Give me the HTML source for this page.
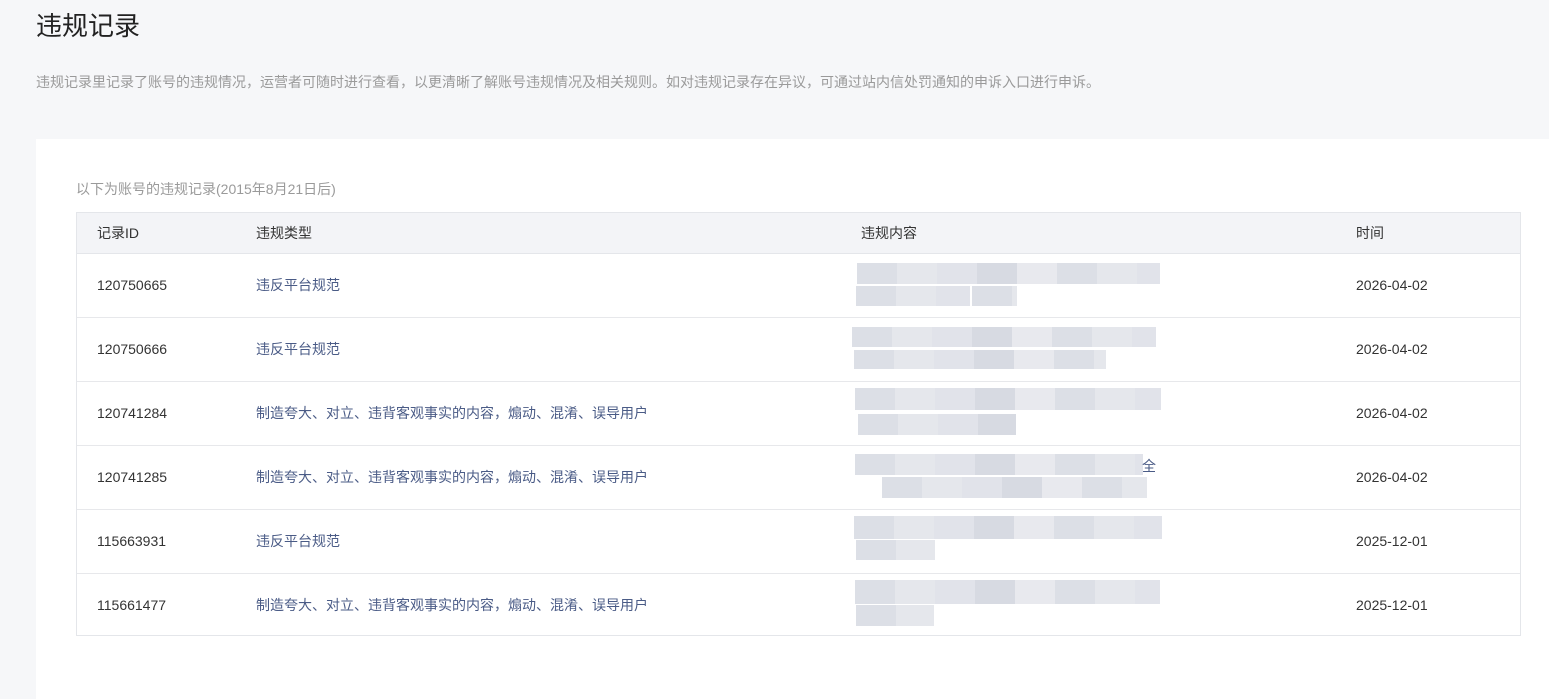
<!DOCTYPE html>
<html><head><meta charset="utf-8"><style>
*{margin:0;padding:0;box-sizing:border-box}
body{width:1549px;height:680px;background:#f6f7f9;font-family:"Liberation Sans","Noto Sans CJK SC",sans-serif;position:relative;overflow:hidden}
.t{position:absolute;left:36px;top:9px;font-size:26px;color:#222;line-height:34px}
.d{position:absolute;left:36px;top:72px;font-size:14px;color:#9a9a9a;line-height:20px;white-space:nowrap}
.card{position:absolute;left:36px;top:139px;width:1513px;height:560px;background:#fff}
.s{position:absolute;left:76px;top:179px;font-size:14px;color:#9a9a9a;line-height:20px}
.tb{position:absolute;left:76px;top:212px;width:1445px;height:424px;border:1px solid #e4e6ea}
.h{position:absolute;left:0;top:0;width:100%;height:41px;background:#f3f4f7;border-bottom:1px solid #e4e6ea}
.r{position:absolute;left:0;width:100%;height:64px;border-bottom:1px solid #e7e8eb}
.c{position:absolute;font-size:14px;line-height:20px;color:#333;white-space:nowrap}
.ty{color:#4a5b86;font-size:14px}
.b{position:absolute;background:repeating-linear-gradient(90deg,#dcdfe6 0 40px,#e5e7ec 40px 80px,#e1e3ea 80px 120px,#d7dae2 120px 160px,#e8e9ee 160px 200px)}
</style></head><body>
<div class="t">违规记录</div>
<div class="d">违规记录里记录了账号的违规情况，运营者可随时进行查看，以更清晰了解账号违规情况及相关规则。如对违规记录存在异议，可通过站内信处罚通知的申诉入口进行申诉。</div>
<div class="card"></div>
<div class="s">以下为账号的违规记录(2015年8月21日后)</div>
<div class="tb">
<div class="h">
<div class="c" style="left:20px;top:10px">记录ID</div>
<div class="c" style="left:179px;top:10px">违规类型</div>
<div class="c" style="left:784px;top:10px">违规内容</div>
<div class="c" style="left:1279px;top:10px">时间</div>
</div>
<div class="r" style="top:41px"><div class="c" style="left:20px;top:21px">120750665</div><div class="c ty" style="left:179px;top:21px">违反平台规范</div><div class="c" style="left:1279px;top:21px">2026-04-02</div></div>
<div class="r" style="top:105px"><div class="c" style="left:20px;top:21px">120750666</div><div class="c ty" style="left:179px;top:21px">违反平台规范</div><div class="c" style="left:1279px;top:21px">2026-04-02</div></div>
<div class="r" style="top:169px"><div class="c" style="left:20px;top:21px">120741284</div><div class="c ty" style="left:179px;top:21px">制造夸大、对立、违背客观事实的内容，煽动、混淆、误导用户</div><div class="c" style="left:1279px;top:21px">2026-04-02</div></div>
<div class="r" style="top:233px"><div class="c" style="left:20px;top:21px">120741285</div><div class="c ty" style="left:179px;top:21px">制造夸大、对立、违背客观事实的内容，煽动、混淆、误导用户</div><div class="c" style="left:1279px;top:21px">2026-04-02</div></div>
<div class="r" style="top:297px"><div class="c" style="left:20px;top:21px">115663931</div><div class="c ty" style="left:179px;top:21px">违反平台规范</div><div class="c" style="left:1279px;top:21px">2025-12-01</div></div>
<div class="r" style="top:361px;border-bottom:none"><div class="c" style="left:20px;top:21px">115661477</div><div class="c ty" style="left:179px;top:21px">制造夸大、对立、违背客观事实的内容，煽动、混淆、误导用户</div><div class="c" style="left:1279px;top:21px">2025-12-01</div></div>
</div>
<div class="b" style="left:857px;top:263px;width:303px;height:21px"></div>
<div class="b" style="left:856px;top:286px;width:114px;height:20px"></div>
<div class="b" style="left:972px;top:286px;width:45px;height:20px"></div>
<div class="b" style="left:852px;top:327px;width:304px;height:20px"></div>
<div class="b" style="left:854px;top:350px;width:252px;height:19px"></div>
<div class="b" style="left:855px;top:388px;width:306px;height:22px"></div>
<div class="b" style="left:858px;top:414px;width:158px;height:21px"></div>
<div class="b" style="left:855px;top:454px;width:288px;height:21px"></div>
<div class="c ty" style="position:absolute;left:1142px;top:456px">全</div>
<div class="b" style="left:882px;top:477px;width:265px;height:21px"></div>
<div class="b" style="left:854px;top:516px;width:308px;height:23px"></div>
<div class="b" style="left:856px;top:540px;width:79px;height:20px"></div>
<div class="b" style="left:855px;top:580px;width:305px;height:24px"></div>
<div class="b" style="left:856px;top:605px;width:78px;height:21px"></div>
</body></html>
